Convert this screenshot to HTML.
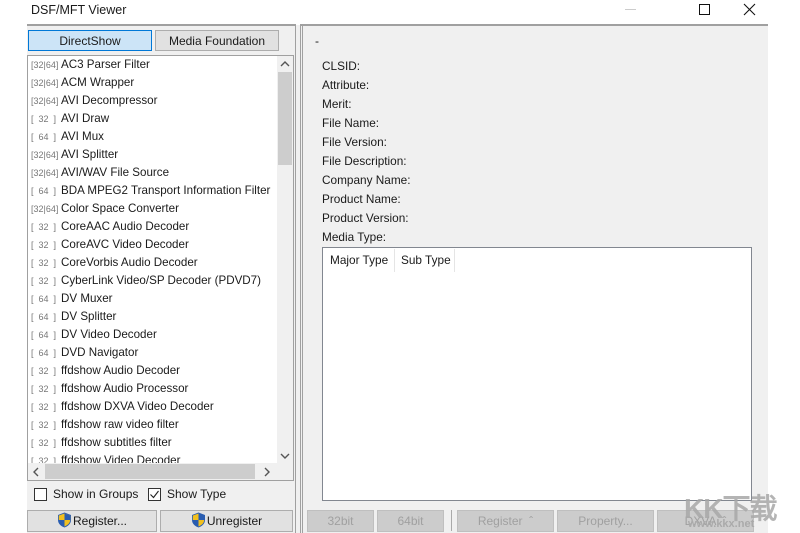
<!DOCTYPE html>
<html><head><style>
*{margin:0;padding:0;box-sizing:border-box}
body{width:800px;height:533px;background:#fff;position:relative;overflow:hidden;font-family:"Liberation Sans",sans-serif;font-size:12px;color:#1a1a1a}
.a{position:absolute}
.btn{position:absolute;background:#e1e1e1;border:1px solid #adadad;text-align:center;line-height:20px;font-size:12px}
.dis{background:#cccccc;border:1px solid #bfbfbf;color:#a0a0a0}
.row{position:absolute;left:31px;height:18px;line-height:18px;white-space:nowrap;font-size:11.6px}
.row i{font-style:normal;color:#777;font-size:9px;display:inline-block;width:30px}
.lbl{position:absolute;left:322px;font-size:11.8px}
.sh{display:inline-block;vertical-align:-3px;margin-right:1px}
</style></head><body>
<div class="a" style="left:31px;top:3px;font-size:12.5px">DSF/MFT Viewer</div>
<div class="a" style="left:625px;top:9px;width:11px;border-top:1px solid #ccc"></div>
<div class="a" style="left:699px;top:4px;width:11px;height:11px;border:1px solid #111"></div>
<svg class="a" style="left:743px;top:3px" width="13" height="13"><path d="M1 1L12 12M12 1L1 12" stroke="#111" stroke-width="1.1"/></svg>

<div class="a" style="left:27px;top:25px;width:741px;height:508px;background:#f0f0f0"></div>
<div class="a" style="left:27px;top:24px;width:269px;border-top:2px solid #a0a0a0"></div>
<div class="a" style="left:300px;top:24px;width:468px;border-top:2px solid #a0a0a0"></div>
<div class="a" style="left:295px;top:24px;width:1px;height:509px;background:#a0a0a0"></div>
<div class="a" style="left:300px;top:24px;width:1px;height:509px;background:#a0a0a0"></div>
<div class="a" style="left:302px;top:24px;width:1px;height:509px;background:#a0a0a0"></div>

<div class="btn" style="left:28px;top:30px;width:124px;height:21px;background:#cce4f7;border-color:#0078d7">DirectShow</div>
<div class="btn" style="left:155px;top:30px;width:124px;height:21px">Media Foundation</div>

<div class="a" style="left:27px;top:55px;width:267px;height:426px;background:#fff;border:1px solid #a0a0a0;overflow:hidden">
</div>
<div class="a" style="left:28px;top:56px;width:249px;height:407px;overflow:hidden">
<div style="position:relative;left:-28px;top:-56px">
<div class="row" style="top:56px"><i>[32|64]</i>AC3 Parser Filter</div>
<div class="row" style="top:74px"><i>[32|64]</i>ACM Wrapper</div>
<div class="row" style="top:92px"><i>[32|64]</i>AVI Decompressor</div>
<div class="row" style="top:110px"><i>[ &nbsp;32 &nbsp;]</i>AVI Draw</div>
<div class="row" style="top:128px"><i>[ &nbsp;64 &nbsp;]</i>AVI Mux</div>
<div class="row" style="top:146px"><i>[32|64]</i>AVI Splitter</div>
<div class="row" style="top:164px"><i>[32|64]</i>AVI/WAV File Source</div>
<div class="row" style="top:182px"><i>[ &nbsp;64 &nbsp;]</i>BDA MPEG2 Transport Information Filter</div>
<div class="row" style="top:200px"><i>[32|64]</i>Color Space Converter</div>
<div class="row" style="top:218px"><i>[ &nbsp;32 &nbsp;]</i>CoreAAC Audio Decoder</div>
<div class="row" style="top:236px"><i>[ &nbsp;32 &nbsp;]</i>CoreAVC Video Decoder</div>
<div class="row" style="top:254px"><i>[ &nbsp;32 &nbsp;]</i>CoreVorbis Audio Decoder</div>
<div class="row" style="top:272px"><i>[ &nbsp;32 &nbsp;]</i>CyberLink Video/SP Decoder (PDVD7)</div>
<div class="row" style="top:290px"><i>[ &nbsp;64 &nbsp;]</i>DV Muxer</div>
<div class="row" style="top:308px"><i>[ &nbsp;64 &nbsp;]</i>DV Splitter</div>
<div class="row" style="top:326px"><i>[ &nbsp;64 &nbsp;]</i>DV Video Decoder</div>
<div class="row" style="top:344px"><i>[ &nbsp;64 &nbsp;]</i>DVD Navigator</div>
<div class="row" style="top:362px"><i>[ &nbsp;32 &nbsp;]</i>ffdshow Audio Decoder</div>
<div class="row" style="top:380px"><i>[ &nbsp;32 &nbsp;]</i>ffdshow Audio Processor</div>
<div class="row" style="top:398px"><i>[ &nbsp;32 &nbsp;]</i>ffdshow DXVA Video Decoder</div>
<div class="row" style="top:416px"><i>[ &nbsp;32 &nbsp;]</i>ffdshow raw video filter</div>
<div class="row" style="top:434px"><i>[ &nbsp;32 &nbsp;]</i>ffdshow subtitles filter</div>
<div class="row" style="top:452px"><i>[ &nbsp;32 &nbsp;]</i>ffdshow Video Decoder</div>
</div></div>
<div class="a" style="left:277px;top:56px;width:16px;height:407px;background:#f0f0f0"></div>
<div class="a" style="left:278px;top:72px;width:14px;height:93px;background:#cdcdcd"></div>
<svg class="a" style="left:280px;top:60px" width="10" height="8"><path d="M1 6L5 2L9 6" stroke="#555" stroke-width="1.4" fill="none"/></svg>
<svg class="a" style="left:280px;top:452px" width="10" height="8"><path d="M1 2L5 6L9 2" stroke="#555" stroke-width="1.4" fill="none"/></svg>
<div class="a" style="left:28px;top:463px;width:265px;height:17px;background:#f0f0f0"></div>
<div class="a" style="left:45px;top:464px;width:210px;height:15px;background:#cdcdcd"></div>
<svg class="a" style="left:32px;top:467px" width="8" height="10"><path d="M6 1L2 5L6 9" stroke="#555" stroke-width="1.4" fill="none"/></svg>
<svg class="a" style="left:263px;top:467px" width="8" height="10"><path d="M2 1L6 5L2 9" stroke="#555" stroke-width="1.4" fill="none"/></svg>

<div class="a" style="left:34px;top:488px;width:13px;height:13px;border:1px solid #333;background:#fff"></div>
<div class="a" style="left:53px;top:487px">Show in Groups</div>
<div class="a" style="left:148px;top:488px;width:13px;height:13px;border:1px solid #333;background:#fff"></div>
<svg class="a" style="left:149px;top:489px" width="11" height="11"><path d="M1.5 5.5L4.5 8.5L9.5 2" stroke="#222" fill="none" stroke-width="1.1"/></svg>
<div class="a" style="left:167px;top:487px">Show Type</div>

<div class="btn" style="left:27px;top:510px;width:130px;height:22px"><svg class="sh" width="15" height="16" viewBox="0 0 15 16"><path d="M7.5 0.5L14 3V8C14 12 10.5 14.5 7.5 15.5C4.5 14.5 1 12 1 8V3Z" fill="#2a5db0"/><path d="M7.5 1.5V8H13.2V3.5ZM7.5 8V14.5C10 13.5 13 11.5 13.2 8Z" fill="#f2c01e"/><path d="M7.5 8H1.8C2 11.5 5 13.5 7.5 14.5Z" fill="#2a5db0"/><path d="M7.5 1.5L1.8 3.5V8H7.5Z" fill="#f2c01e"/><path d="M7.5 1.5V8H13.2V3.5Z" fill="#2a5db0"/></svg>Register...</div>
<div class="btn" style="left:160px;top:510px;width:133px;height:22px"><svg class="sh" width="15" height="16" viewBox="0 0 15 16"><path d="M7.5 0.5L14 3V8C14 12 10.5 14.5 7.5 15.5C4.5 14.5 1 12 1 8V3Z" fill="#2a5db0"/><path d="M7.5 8V14.5C10 13.5 13 11.5 13.2 8Z" fill="#f2c01e"/><path d="M7.5 1.5L1.8 3.5V8H7.5Z" fill="#f2c01e"/></svg>Unregister</div>

<div class="a" style="left:315px;top:34px">-</div>
<div class="lbl" style="top:59px">CLSID:</div>
<div class="lbl" style="top:78px">Attribute:</div>
<div class="lbl" style="top:97px">Merit:</div>
<div class="lbl" style="top:116px">File Name:</div>
<div class="lbl" style="top:135px">File Version:</div>
<div class="lbl" style="top:154px">File Description:</div>
<div class="lbl" style="top:173px">Company Name:</div>
<div class="lbl" style="top:192px">Product Name:</div>
<div class="lbl" style="top:211px">Product Version:</div>
<div class="lbl" style="top:230px">Media Type:</div>
<div class="a" style="left:322px;top:247px;width:430px;height:254px;background:#fff;border:1px solid #828790"></div>
<div class="a" style="left:330px;top:253px;font-size:11.8px">Major Type</div>
<div class="a" style="left:394px;top:249px;width:1px;height:23px;background:#e5e5e5"></div>
<div class="a" style="left:401px;top:253px;font-size:11.8px">Sub Type</div>
<div class="a" style="left:454px;top:249px;width:1px;height:23px;background:#e5e5e5"></div>

<div class="btn dis" style="left:307px;top:510px;width:67px;height:22px">32bit</div>
<div class="btn dis" style="left:377px;top:510px;width:67px;height:22px">64bit</div>
<div class="a" style="left:451px;top:510px;width:1px;height:21px;background:#aaa"></div>
<div class="btn dis" style="left:457px;top:510px;width:97px;height:22px">Register &nbsp;&#710;</div>
<div class="btn dis" style="left:557px;top:510px;width:97px;height:22px">Property...</div>
<div class="btn dis" style="left:657px;top:510px;width:97px;height:22px">DXVA &nbsp;&#710;</div>
<div class="a" style="left:684px;top:487px;font-size:28px;font-weight:bold;color:#a8a8a8;opacity:.85;letter-spacing:-1px">KK下载</div>
<div class="a" style="left:688px;top:518px;font-size:11px;font-weight:bold;color:#aaa">www.kkx.net</div>
</body></html>
